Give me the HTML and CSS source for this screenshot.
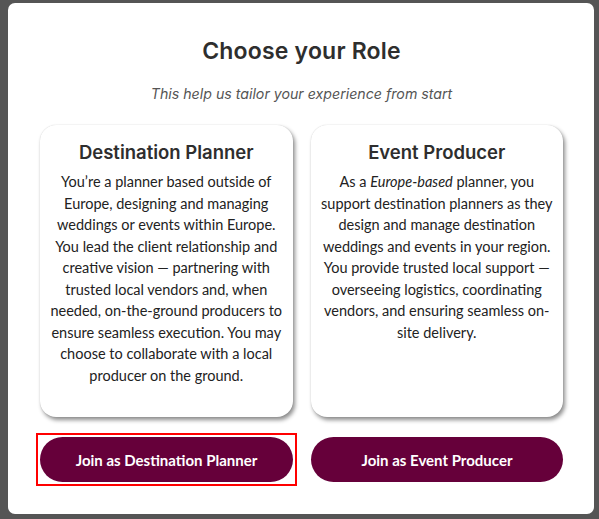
FILE: index.html
```html
<!DOCTYPE html>
<html lang="en">
<head>
<meta charset="utf-8">
<title>Choose your Role</title>
<link rel="stylesheet" href="styles.css">
</head>
<body>
<div class="modal">
  <h1 class="title">Choose your Role</h1>
  <p class="subtitle">This help us tailor your experience from start</p>
  <div class="cards">
    <div class="card">
      <h2 class="card-title">Destination Planner</h2>
      <p class="card-text">You’re a planner based outside of Europe, designing and managing weddings or events within Europe. You lead the client relationship and creative vision — partnering with trusted local vendors and, when needed, on-the-ground producers to ensure seamless execution. You may choose to collaborate with a local producer on the ground.</p>
    </div>
    <div class="card">
      <h2 class="card-title">Event Producer</h2>
      <p class="card-text">As a <em>Europe-based</em> planner, you support destination planners as they design and manage destination weddings and events in your region. You provide trusted local support — overseeing logistics, coordinating vendors, and ensuring seamless on-site delivery.</p>
    </div>
  </div>
  <div class="actions">
    <div class="focus-ring">
      <button class="btn">Join as Destination Planner</button>
    </div>
    <button class="btn">Join as Event Producer</button>
  </div>
</div>
</body>
</html>
```
FILE: styles.css
```css
html, body {
  margin: 0;
  padding: 0;
}
body {
  background: #555555;
  width: 599px;
  height: 519px;
  overflow: hidden;
  padding: 3px 0 0 8px;
  box-sizing: border-box;
}
.modal {
  width: 586px;
  height: 511px;
  background: #ffffff;
  border-radius: 7px;
  box-sizing: border-box;
  padding: 34px 31px 0 32px;
  display: flex;
  flex-direction: column;
  align-items: stretch;
}
.title {
  margin: 0;
  text-align: center;
  font-family: "Inter", "Noto Sans", sans-serif;
  font-weight: 600;
  font-size: 23px;
  line-height: 28px;
  color: #2e2e2e;
  letter-spacing: 0.2px;
}
.subtitle {
  margin: 20px 0 0;
  text-align: center;
  font-family: "Inter", "Noto Sans", sans-serif;
  font-style: italic;
  font-size: 14.2px;
  line-height: 18px;
  color: #555555;
}
.cards {
  margin-top: 22px;
  display: flex;
  gap: 18px;
}
.card {
  width: 253px;
  height: 292px;
  box-sizing: border-box;
  background: #ffffff;
  border-radius: 16px;
  box-shadow: 2px 3px 4px rgba(0, 0, 0, 0.45), 0 0 1px rgba(0, 0, 0, 0.2);
  padding: 15px 10px 0;
  text-align: center;
}
.card-title {
  margin: 0;
  font-family: "Inter", "Noto Sans", sans-serif;
  font-weight: 600;
  font-size: 18.5px;
  line-height: 24px;
  color: #2e2e2e;
}
.card-text {
  margin: 7px 0 0;
  font-family: "Lato", sans-serif;
  font-size: 14.5px;
  line-height: 21.5px;
  color: #222222;
}
.card-text em {
  font-style: italic;
}
.actions {
  margin-top: 20px;
  display: flex;
  gap: 18px;
}
.focus-ring {
  display: flex;
  outline: 2px solid #ff0000;
  outline-offset: 2px;
}
.btn {
  width: 253px;
  height: 45px;
  border: none;
  border-radius: 23px;
  background: #66003a;
  color: #ffffff;
  font-family: "Lato", sans-serif;
  font-weight: 700;
  font-size: 15px;
  padding: 0;
  cursor: pointer;
}
```
